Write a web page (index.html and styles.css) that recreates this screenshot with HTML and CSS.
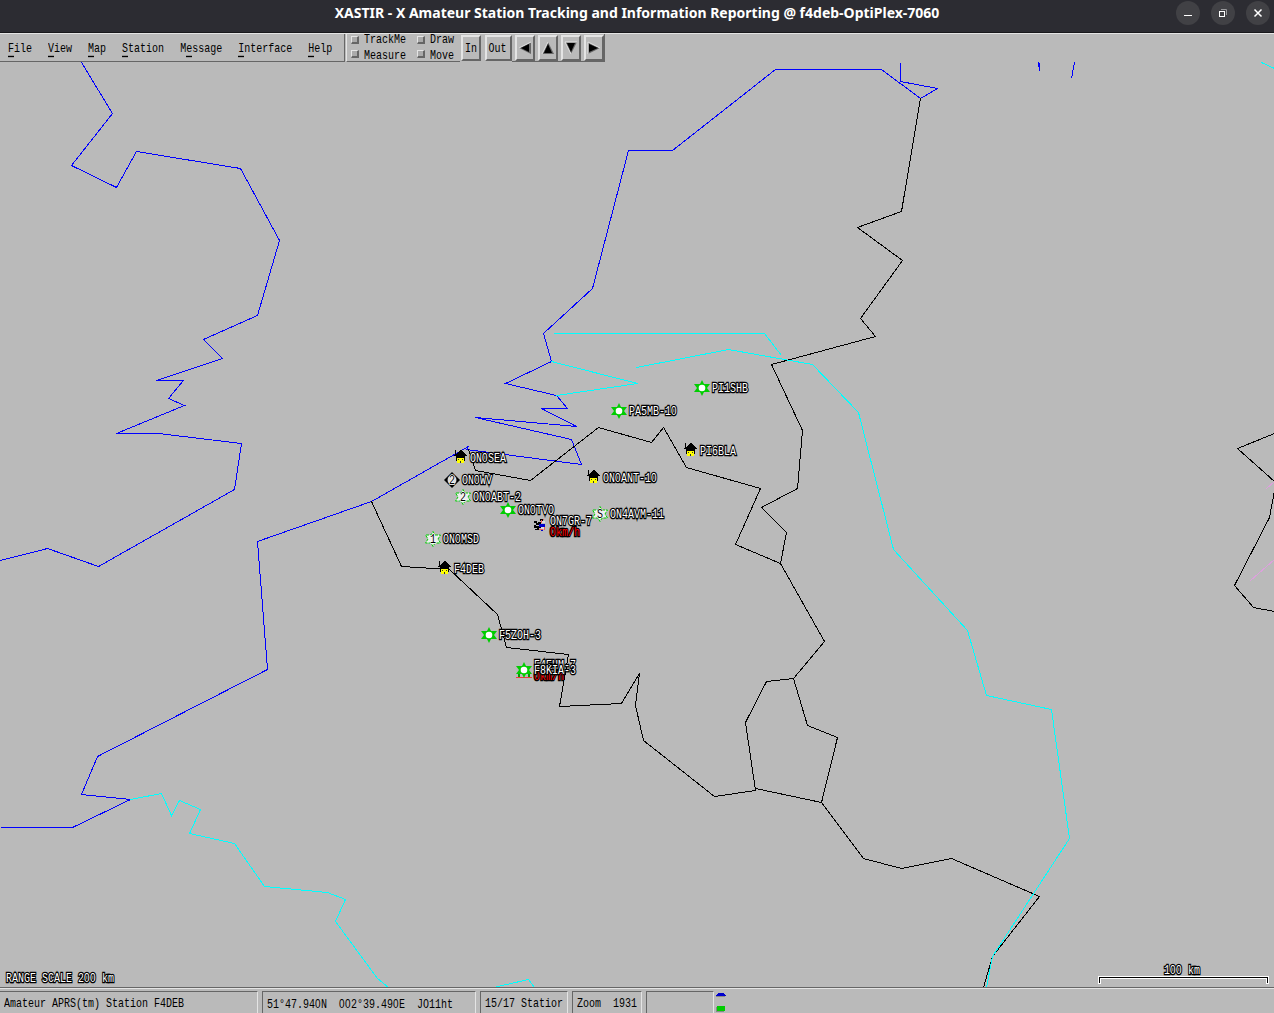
FILE: index.html
```html
<!DOCTYPE html>
<html lang="en">
<head>
<meta charset="utf-8">
<title>XASTIR</title>
<link rel="stylesheet" href="styles.css">
</head>
<body>
<header class="titlebar">
  <h1 class="title">XASTIR - X Amateur Station Tracking and Information Reporting @ f4deb-OptiPlex-7060</h1>
  <div class="window-buttons">
    <span class="wbtn"><svg width="24" height="24"><path d="M8 14.5h8" stroke="#fff"/></svg></span>
    <span class="wbtn"><svg width="24" height="24" fill="none"><path d="M10 8.5h5.500v5.500" stroke="#99999c"/><rect x="8.500" y="10.500" width="5" height="5" stroke="#fff"/></svg></span>
    <span class="wbtn"><svg width="24" height="24"><path d="M8.500 8.500l7 7m0-7l-7 7" stroke="#fff" stroke-width="1.500"/></svg></span>
  </div>
</header>
<div class="toolbar">
  <nav class="menubar">
    <span class="x"><u>F</u>ile</span><span class="x"><u>V</u>iew</span><span class="x"><u>M</u>ap</span><span class="x"><u>S</u>tation</span><span class="x">M<u>e</u>ssage</span><span class="x"><u>I</u>nterface</span><span class="x"><u>H</u>elp</span>
  </nav>
  <div class="toggles">
    <div class="toggle"><i class="box"></i><span class="x">TrackMe</span></div>
    <div class="toggle"><i class="box"></i><span class="x">Draw</span></div>
    <div class="toggle"><i class="box"></i><span class="x">Measure</span></div>
    <div class="toggle"><i class="box"></i><span class="x">Move</span></div>
  </div>
  <button class="btn in"><span class="x">In</span></button>
  <button class="btn out"><span class="x">Out</span></button>
  <div class="arrows">
    <button class="btn"><svg width="14" height="14"><path d="M1 7L13 1V13Z" fill="#666"/><path d="M1 7L13 1" stroke="#e4e4e4"/><path d="M3 7L11 3V11Z"/></svg></button>
    <button class="btn"><svg width="14" height="14"><path d="M7 1L13 13H1Z" fill="#666"/><path d="M7 1L1 13" stroke="#e4e4e4"/><path d="M7 3L11 12H3Z"/></svg></button>
    <button class="btn"><svg width="14" height="14"><path d="M1 1H13L7 13Z" fill="#666"/><path d="M13 1H1L7 13" fill="none" stroke="#e4e4e4"/><path d="M3 2H11L7 11Z"/></svg></button>
    <button class="btn"><svg width="14" height="14"><path d="M1 1L13 7L1 13Z" fill="#666"/><path d="M1 13V1L13 7" fill="none" stroke="#e4e4e4"/><path d="M2 3L11 7L2 11Z"/></svg></button>
  </div>
</div>
<main class="map">
<svg width="1274" height="925" viewBox="0 62 1274 925">
  <defs>
    <g id="star"><path d="M0-8L2-4H8L5 0L8 4H2L0 8L-2 4H-8L-5 0L-8-4H-2Z" fill="#00cd00"/><circle r="3.300" fill="#fff"/></g>
    <g id="starnum"><path d="M0-7.500L2-4H7.500L5 0L7.500 4H2L0 7.500L-2 4H-7.500L-5 0L-7.500-4H-2Z" fill="#eee" stroke="#00cd00" stroke-dasharray="3 1"/></g>
    <g id="house" shape-rendering="crispEdges"><path d="M-5-8h1v4h1v-1h1v-1h1v-1h1v-1h2v1h1v1h1v1h1v1h1v1h1v1h-2v5h-9v-5h-2v-1h1z"/><path d="M-3 0h7v5h-7z" fill="#ff0"/><path d="M-2 1h1v1h-1zM2 1h1v1h-1zM0 3h1v2h-1z" fill="#333"/></g>
  </defs>
  <g class="coast">
    <polyline points="81,62 112,113 71,165 116,187 136,151 240,168 279,240 257,315 203,339 222,358 156,380 183,380 168,398 184,405 116,433 158,433 241,443 234,489 98,566 47,548 0,560"/>
    <polyline points="0,827 72,827 130,799 81,794 97,756 267,669 257,541 371,501 468,446 466,449 581,464 571,439 475,417 576,426 541,408 567,408 556,395 505,383 551,361 543,333 592,288 628,150 672,150 775,69 881,69 920,98 937,88 900,81 900,62"/>
    <polyline points="1038,62 1039,70 1039,62"/><polyline points="1074,62 1071,78"/>
  </g>
  <g class="border">
    <polyline points="920,98 901,211 857,227 902,260 860,318 875,336 771,364 802,430 797,488 761,507 786,532 780,563 824,641 793,678 807,725 837,737 821,802 863,858 901,868 951,858 1039,896 992,956 983,987"/>
    <polyline points="468,449 475,470 530,480 598,427 651,442 663,427 686,467 760,488 735,544 780,563"/>
    <polyline points="371,501 401,566 449,569 497,614 506,647 568,654 559,706 621,703 639,673 635,705 643,740 714,796 755,790 745,722 766,681 793,678"/>
    <polyline points="755,788 821,802"/>
    <polyline points="1274,433 1237,448 1274,481"/>
    <polyline points="1274,490 1269,517 1234,585 1253,607 1274,611"/>
  </g>
  <g class="river">
    <polyline points="551,361 637,383 556,395"/><polyline points="553,333 764,333 781,355"/>
    <polyline points="636,367 728,349 812,364 858,412 893,549 967,630 986,695 1051,709 1069,838 992,956 986,987"/>
    <polyline points="130,799 161,793 171,815 179,800 200,809 189,833 234,843 264,886 327,892 345,899 335,921 377,978 388,987"/>
    <polyline points="493,987 528,979 534,987"/><polyline points="1261,62 1274,68"/>
  </g>
  <g class="track"><path d="M1266 488L1274 481M1250 580L1274 559"/></g>

  <use href="#star" x="702" y="388"/><use href="#star" x="619" y="411"/><use href="#star" x="508" y="510"/><use href="#star" x="489" y="635"/>
  <use href="#house" x="460" y="458"/><use href="#house" x="690" y="451"/><use href="#house" x="593" y="478"/><use href="#house" x="444" y="569"/>
  <use href="#starnum" x="463" y="497"/><use href="#starnum" x="433" y="539"/><use href="#starnum" x="600" y="514"/>
  <path d="M452 472L460 480L452 488L444 480Z"/><circle cx="452" cy="480" r="5" fill="#ddd" stroke="#000" stroke-width="1"/>
  <g shape-rendering="crispEdges"><path d="M540 519h3v2h-3zM534 521h3v2h-3zM536 523h4v2h-4zM538 522h3v3h-3zM534 525h2v3h-2zM536 526h5v2h-5zM537 528h2v2h-2zM535 529h3v1h-3zM541 528h2v1h-2z"/><path d="M539 524h6v3h-6zM541 530h2v1h-2z" fill="#0000cd"/><path d="M541 520h1v3h-1zM543 519h1v1h-1zM544 527h1v3h-1zM539 529h4v1h-4z" fill="#ee5c5c"/><path d="M542 521h3v2h-3zM541 527h3v2h-3z" fill="#ddd"/></g>
  <g class="overlay">
    <text transform="translate(449 484) scale(1 1.360)">2</text><text transform="translate(460 501) scale(1 1.360)">2</text>
    <text transform="translate(430 543) scale(1 1.360)">1</text><text transform="translate(597 518) scale(1 1.360)">S</text>
  </g>
  <path d="M516 677.5h16" stroke="#ee3b3b" shape-rendering="crispEdges"/><path d="M518 674h2v3h-2zM528 674h2v3h-2z" fill="#00a000"/><use href="#star" x="524" y="670"/>
  <g class="labels">
    <text transform="translate(712 392) scale(1 1.360)">PI1SHB</text>
    <text transform="translate(629 415) scale(1 1.360)">PA5MB-1<tspan class="z">0</tspan></text>
    <text transform="translate(700 455) scale(1 1.360)">PI6BLA</text>
    <text transform="translate(470 462) scale(1 1.360)">ON<tspan class="z">0</tspan>SEA</text>
    <text transform="translate(603 482) scale(1 1.360)">ON<tspan class="z">0</tspan>ANT-1<tspan class="z">0</tspan></text>
    <text transform="translate(462 484) scale(1 1.360)">ON<tspan class="z">0</tspan>WV</text>
    <text transform="translate(473 501) scale(1 1.360)">ON<tspan class="z">0</tspan>ABT-2</text>
    <text transform="translate(518 514) scale(1 1.360)">ON<tspan class="z">0</tspan>TVO</text>
    <text transform="translate(610 518) scale(1 1.360)">ON4AVM-11</text>
    <text transform="translate(550 525) scale(1 1.360)">ON7GR-7</text>
    <text class="speed" transform="translate(550 536) scale(1 1.360)"><tspan class="z">0</tspan>km/h</text>
    <text transform="translate(443 543) scale(1 1.360)">ON<tspan class="z">0</tspan>MSD</text>
    <text transform="translate(454 573) scale(1 1.360)">F4DEB</text>
    <text transform="translate(499 639) scale(1 1.360)">F5ZOH-3</text>
    <text transform="translate(534 669) scale(1 1.360)">F4EHM-7</text>
    <text class="speed" transform="translate(534 680) scale(1 1.360)"><tspan class="z">0</tspan>km/h</text>
    <text transform="translate(534 674) scale(1 1.360)">F8KIA-3</text>
    <text transform="translate(6 982) scale(1 1.360)">RANGE SCALE 2<tspan class="z">00</tspan> km</text>
    <text transform="translate(1164 974) scale(1 1.360)">1<tspan class="z">00</tspan> km</text>
  </g>
  <g fill="none" shape-rendering="crispEdges"><path d="M1099.500 984V977.500H1267.500V984" stroke="#fff" stroke-width="3"/><path d="M1099.500 983V977.500H1267.500V983" stroke="#000"/></g>
</svg>
</main>
<footer class="status">
  <div class="field station"><span class="x">Amateur APRS(tm) Station F4DEB</span></div>
  <div class="field coords"><span class="x">51°47.94<span class="z">0</span>N  <span class="z">00</span>2°39.49<span class="z">0</span>E  JO11ht</span></div>
  <div class="field count"><span class="x">15/17 Statior</span></div>
  <div class="field zoom"><span class="x">Zoom  1931</span></div>
  <div class="field log"></div>
  <svg class="lights" width="12" height="22" shape-rendering="crispEdges"><path d="M1 4h9v1H1z" fill="#888"/><path d="M3 1h6v1h1v1h1v1H1v-1h1v-1h1z" fill="#0000cd"/><path d="M1 15h8v5H1z" fill="#888"/><path d="M2 14h8v5H2z" fill="#00cd00"/></svg>
</footer>
</body>
</html>
```
FILE: styles.css
```css
* { box-sizing: border-box; }
body {
  margin: 0; width: 1274px; height: 1013px; overflow: hidden;
  display: flex; flex-direction: column;
  background: #bababa; color: #000;
  font: 10px/14px "Liberation Mono", monospace;
}
.x { display: inline-block; white-space: pre; transform: scaleY(1.36); transform-origin: 50% 50%; }
/* undotted zero, padded to the 6px cell */
.z { font-family: "Liberation Sans", sans-serif; letter-spacing: 0.44px; }
.titlebar {
  flex: 0 0 33px; display: grid; grid-template-columns: 1fr auto;
  background: #2c2c32; border-bottom: 1px solid #18181b; color: #fff;
}
.title {
  grid-area: 1 / 1 / 2 / 3; justify-self: center; margin: 0;
  font: bold 14px/26px "Noto Sans", sans-serif; white-space: nowrap;
}
.window-buttons { grid-area: 1 / 2; display: flex; gap: 11px; padding: 1px 4px 0 0; }
.wbtn { width: 24px; height: 24px; border-radius: 50%; background: #414145; }
.wbtn svg { display: block; }
.toolbar { flex: 0 0 29px; display: flex; border-top: 1px solid #e4e4e4; }
.menubar {
  width: 345px; padding: 8px 0 0 8px; display: flex; gap: 16px; align-items: flex-start;
  border-bottom: 1px solid #666; border-right: 1px solid #666;
}
.menubar u { text-decoration: none; border-bottom: 1px solid #000; display: inline-block; line-height: 10px; }
.toggles {
  width: 114px; margin-left: 1px; padding-left: 4px; display: grid;
  grid-template-columns: 66px 43px; grid-template-rows: 12px 15px; align-content: start;
  border-left: 1px solid #e4e4e4; border-bottom: 1px solid #666;
}
.toggle { display: flex; align-items: center; gap: 5px; line-height: 10px; }
.toggle:nth-child(n+3) { padding-top: 4px; }
.box {
  width: 8px; height: 8px; background: #aaa; border: solid; border-width: 1px 2px 2px 1px;
  border-color: #e4e4e4 #666 #666 #e4e4e4;
}
.toggle:nth-child(n+3) .box { margin-bottom: 3px; }
.btn {
  margin: 1px 0 0; padding: 0; height: 26px; width: 20px; color: #000; font: inherit;
  background: #bababa; border: 2px solid; border-color: #e4e4e4 #666 #666 #e4e4e4;
  display: flex; align-items: center; justify-content: center; border-radius: 0;
}
.btn .x { padding-top: 1px; }
.in { margin-left: 1px; }
.out { width: 27px; margin-left: 4px; padding-right: 2px; }
.arrows {
  width: 93px; display: flex; gap: 3px; padding-left: 3px;
  border-right: 1px solid #666; border-bottom: 1px solid #666;
}
.map { flex: 0 0 925px; }
.map svg { display: block; }
.coast, .border, .river, .track {
  fill: none; stroke-width: 1; shape-rendering: crispEdges; transform: translate(0.5px, 0.5px);
}
.coast { stroke: #00f; }
.border { stroke: #000; }
.river { stroke: #0ff; }
.track { stroke: #dda0dd; }
.labels text, .overlay text {
  font: 10px "Liberation Mono", monospace; fill: #fff; stroke: #000; stroke-width: 2px;
  paint-order: stroke; stroke-linejoin: miter;
}
.labels .z { font-family: "Liberation Sans", sans-serif; }
.overlay text { fill: #000; stroke: #fff; stroke-width: 1px; }
.labels .speed { fill: #f00; }
.status {
  flex: 0 0 26px; display: flex; gap: 4px; padding-top: 2px;
  border-top: 1px solid #666; box-shadow: inset 0 1px #e4e4e4;
}
.field {
  height: 26px; margin-top: 1px; overflow: hidden; padding: 5px 0 0 4px;
  border-top: 1px solid #666; border-left: 1px solid #666; border-right: 1px solid #e4e4e4;
}
.station { width: 258px; border-left: 0; }
.coords { width: 214px; }
.count { width: 88px; }
.zoom { width: 70px; }
.log { width: 68px; }
.lights { margin: 2px 0 0 -3px; }
```
